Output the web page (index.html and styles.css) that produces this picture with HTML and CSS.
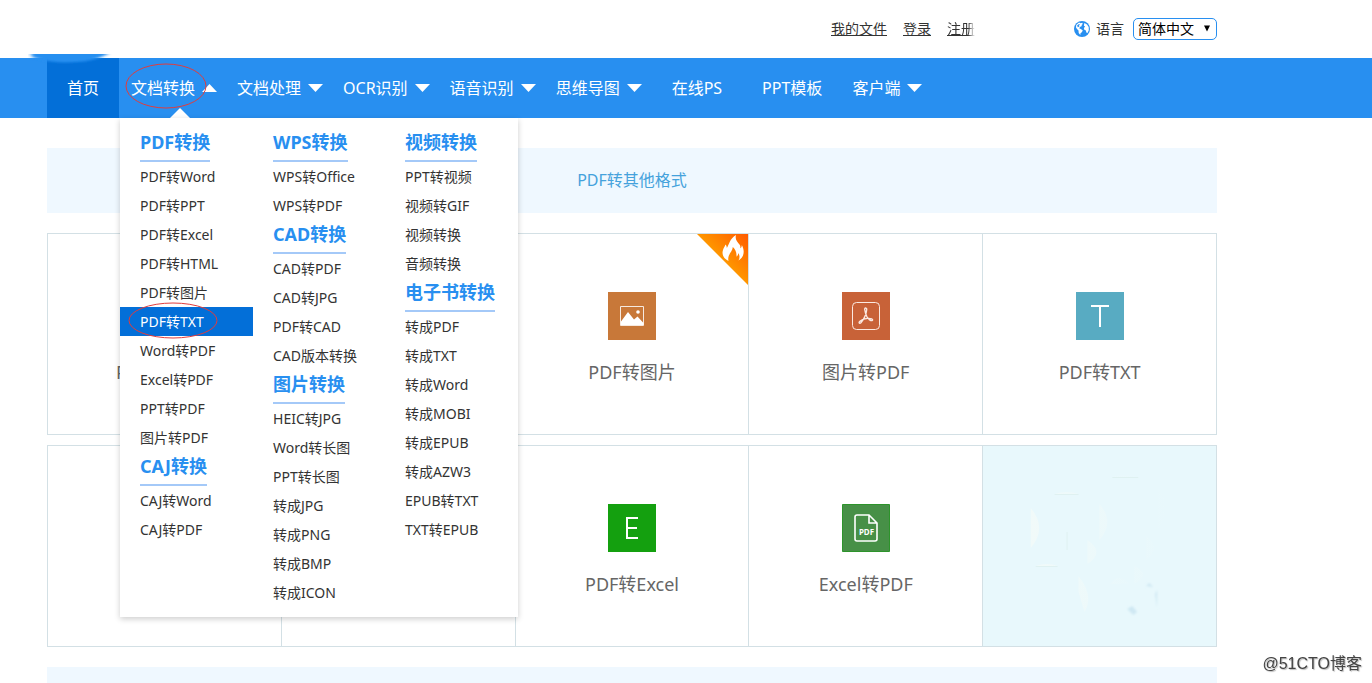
FILE: index.html
```html
<!DOCTYPE html>
<html lang="zh-CN">
<head>
<meta charset="utf-8">
<title>PDF转换</title>
<link rel="stylesheet" href="styles.css">
</head>
<body>
<header class="top">
  <div class="wrap top-row">
    <a class="top-link" href="#">我的文件</a>
    <a class="top-link" href="#">登录</a>
    <a class="top-link fade" href="#">注册</a>
    <div class="lang">
      <svg class="globe" viewBox="0 0 16 16" aria-hidden="true"><circle cx="8" cy="8" r="8" fill="#288ff0"/><path d="M2.200 4 5 1.600l1.600.6 1.600-.5.6 1.200-1.300 1 .4 1.200-2 .9-.6 1.500 1.600.6 1.900 1.400-1 1.800-1.300.9-.2 1.800L4.700 12l-.2-2.400L3 7.900l-1-1.400zM10.400 2l2.600 1.400 1.700 2.600.1 3.300-1.300 2.600-1.200-.3-.4-2-1.600-.8-.4-1.900 1.200-1.400-1.200-.8.2-1.400z" fill="#fff"/><path d="M3.100 4.500 5 3l.9.6-1 1.100.6.8-1.700.7z" fill="#288ff0"/></svg>
      <label for="lang">语言</label>
      <span class="select-box">
        <select id="lang"><option>简体中文</option></select>
        <svg class="caret" viewBox="0 0 6 6" aria-hidden="true"><path d="M0 0h6L3 6z"/></svg>
      </span>
    </div>
  </div>
</header>

<nav class="nav">
  <svg class="logo-edge" viewBox="0 0 90 20" aria-hidden="true"><defs><filter id="soft"><feGaussianBlur stdDeviation="2 1"/></filter></defs><path d="M2-4h78v4q-16 8-32 8-26 2-44-5z" fill="#288ff0" filter="url(#soft)"/></svg>
  <div class="wrap nav-row">
    <a class="nav-item plain active" href="#">首页</a>
    <div class="nav-group">
      <a class="nav-item" href="#">文档转换<svg class="arrow" viewBox="0 0 15 8" aria-hidden="true"><path d="M0 8h15L7.500 0z" fill="#fff"/></svg></a>
      <svg class="mark mark-nav" viewBox="0 0 82 46" aria-hidden="true"><ellipse cx="41" cy="23" rx="40" ry="22"/></svg>
      <svg class="pointer" viewBox="0 0 20 10" aria-hidden="true"><path d="M0 10 10 0l10 10z" fill="#fff"/></svg>
      <div class="menu">
        <div class="menu-col">
          <h3>PDF转换</h3>
          <a href="#">PDF转Word</a><a href="#">PDF转PPT</a><a href="#">PDF转Excel</a><a href="#">PDF转HTML</a><a href="#">PDF转图片</a>
          <a class="current" href="#">PDF转TXT<svg class="mark mark-menu" viewBox="0 0 90 37" aria-hidden="true"><ellipse cx="45" cy="18.500" rx="44" ry="17.500"/></svg></a>
          <a href="#">Word转PDF</a><a href="#">Excel转PDF</a><a href="#">PPT转PDF</a><a href="#">图片转PDF</a>
          <h3>CAJ转换</h3>
          <a href="#">CAJ转Word</a><a href="#">CAJ转PDF</a>
        </div>
        <div class="menu-col">
          <h3>WPS转换</h3>
          <a href="#">WPS转Office</a><a href="#">WPS转PDF</a>
          <h3>CAD转换</h3>
          <a href="#">CAD转PDF</a><a href="#">CAD转JPG</a><a href="#">PDF转CAD</a><a href="#">CAD版本转换</a>
          <h3>图片转换</h3>
          <a href="#">HEIC转JPG</a><a href="#">Word转长图</a><a href="#">PPT转长图</a><a href="#">转成JPG</a><a href="#">转成PNG</a><a href="#">转成BMP</a><a href="#">转成ICON</a>
        </div>
        <div class="menu-col">
          <h3>视频转换</h3>
          <a href="#">PPT转视频</a><a href="#">视频转GIF</a><a href="#">视频转换</a><a href="#">音频转换</a>
          <h3>电子书转换</h3>
          <a href="#">转成PDF</a><a href="#">转成TXT</a><a href="#">转成Word</a><a href="#">转成MOBI</a><a href="#">转成EPUB</a><a href="#">转成AZW3</a><a href="#">EPUB转TXT</a><a href="#">TXT转EPUB</a>
        </div>
      </div>
    </div>
    <a class="nav-item" href="#">文档处理<svg class="arrow" viewBox="0 0 15 8" aria-hidden="true"><path d="M0 0h15L7.500 8z" fill="#fff"/></svg></a>
    <a class="nav-item" href="#">OCR识别<svg class="arrow" viewBox="0 0 15 8" aria-hidden="true"><path d="M0 0h15L7.500 8z" fill="#fff"/></svg></a>
    <a class="nav-item" href="#">语音识别<svg class="arrow" viewBox="0 0 15 8" aria-hidden="true"><path d="M0 0h15L7.500 8z" fill="#fff"/></svg></a>
    <a class="nav-item" href="#">思维导图<svg class="arrow" viewBox="0 0 15 8" aria-hidden="true"><path d="M0 0h15L7.500 8z" fill="#fff"/></svg></a>
    <a class="nav-item plain" href="#">在线PS</a>
    <a class="nav-item plain" href="#">PPT模板</a>
    <a class="nav-item" href="#">客户端<svg class="arrow" viewBox="0 0 15 8" aria-hidden="true"><path d="M0 0h15L7.500 8z" fill="#fff"/></svg></a>
  </div>
</nav>

<main class="wrap content">
  <h2 class="band">PDF转其他格式</h2>
  <div class="cards">
    <a class="card label-only" href="#">PDF转Word</a>
    <div class="card"></div>
    <a class="card" href="#">
      <svg class="hot" viewBox="0 0 51 51" aria-hidden="true"><defs><linearGradient id="fire" x1="1" y1="0" x2=".45" y2=".55"><stop offset="0" stop-color="#ff5a00"/><stop offset="1" stop-color="#ff9c00"/></linearGradient></defs><path d="M0 0h51v51z" fill="url(#fire)"/><path d="M31.500 27c-5-2.500-7-6.500-5.500-11 .8-2.500 2-3.500 2.500-5.500 1 1 1.300 2.200 1.300 3.500C32.500 10 32.500 5 39 1c-1.300 4.500 1.500 7 3.500 9.500 1 1.300 1 2.500.8 3.800 1-.6 1.500-1.800 1.500-3.300 2.500 4.500 3.500 11.500-3.300 15.500 1.500-2.500 1.300-5-.2-7.500-.1 2-.8 3-1.800 3.500.3-4.500-1.500-7.500-3.700-9.500 0 4.500-5.800 7.500-4.300 14z" fill="#fff"/></svg>
      <svg class="icon" viewBox="0 0 48 48" aria-hidden="true"><path d="M0 0h48v48H0z" fill="#c87839"/><path d="M12.500 14.500h23v19h-23z" fill="none" stroke="#f6e9df"/><path d="M13 29.500 20 20l6 7.500 3.500-3 6 6.500v2H13z" fill="#fff"/><circle cx="30" cy="20" r="1.800" fill="#fff"/></svg>
      <span>PDF转图片</span>
    </a>
    <a class="card" href="#">
      <svg class="icon" viewBox="0 0 48 48" aria-hidden="true"><path d="M0 0h48v48H0z" fill="#c86238"/><g fill="none" stroke="#fbe9e1"><rect x="10.500" y="10.500" width="27" height="27" rx="4"/><path d="M22.700 17c.5-1.500 2.300-1.200 2 .7-.5 4.800-3.500 10.300-5.800 13-1.700 1.500-2.500-.3-1-1.500 3.200-2.500 8.500-3.200 12-2.200 1.500.8.300 2-1.200 1.500-3.200-1.300-5-5-6-11z" stroke-width="1.400"/></g></svg>
      <span>图片转PDF</span>
    </a>
    <a class="card" href="#">
      <svg class="icon" viewBox="0 0 48 48" aria-hidden="true"><path d="M0 0h48v48H0z" fill="#58abc2"/><path d="M15 14h18M24 14v21" fill="none" stroke="#fff" stroke-width="2"/></svg>
      <span>PDF转TXT</span>
    </a>
  </div>
  <div class="cards">
    <div class="card"></div>
    <div class="card"></div>
    <a class="card" href="#">
      <svg class="icon" viewBox="0 0 48 48" aria-hidden="true"><path d="M0 0h48v48H0z" fill="#14a00f"/><path d="M30 14H19v20h11M19 24h10" fill="none" stroke="#fff" stroke-width="2"/></svg>
      <span>PDF转Excel</span>
    </a>
    <a class="card" href="#">
      <svg class="icon" viewBox="0 0 48 48" aria-hidden="true"><path d="M.5.5h47v47H.5z" fill="#479047" stroke="#2d942b"/><path d="M15 11h12l8 8v16q0 2-2 2H15q-2 0-2-2V13q0-2 2-2zM27 11v8h8" fill="none" stroke="#fff" stroke-width="1.600"/><text class="doc-text" x="24.500" y="30.500" text-anchor="middle">PDF</text></svg>
      <span>Excel转PDF</span>
    </a>
    <div class="card pale">
      <svg class="traces" viewBox="0 0 234 200" preserveAspectRatio="none" aria-hidden="true"><defs><linearGradient id="glow"><stop offset="0" stop-color="#f1faf9"/><stop offset="1" stop-color="#e8f8fc"/></linearGradient><filter id="haze"><feGaussianBlur stdDeviation="1"/></filter></defs><g fill="url(#glow)"><path d="M48 62q17 20 0 40zM117 58q16 18 0 36zM176 42q16 21 0 42zM105 94q18 12 0 24zM164 90q16 12 0 24zM152 120q18 8 0 18zM96 130q16 20 6 36l-6-20z"/><path d="M72 48q12-4 24 0zM130 31q13-4 26 0zM53 120q12-4 22 0zM128 138q8-12 20 0z"/></g><path d="M84.500 86v18M72 48.500h24M130 31.500h26M53 120.500h22" stroke="#dff1f1" fill="none"/><g fill="#cfe8f3" filter="url(#haze)"><path d="M173 148l2-4v18zM145 163l5-3 5 6-4 3zM164 140l3-3 4 4z"/></g></svg>
    </div>
  </div>
  <div class="band-next"></div>
</main>
<div class="watermark">@51CTO博客</div>
</body>
</html>
```
FILE: styles.css
```css
* { box-sizing: border-box; }
body {
  margin: 0;
  min-height: 100vh;
  display: flex;
  flex-direction: column;
  background: #fff;
  color: #333;
  font: 14px/20px "Noto Sans", "Noto Sans CJK SC", sans-serif;
}
a { color: inherit; text-decoration: none; }
h2, h3 { margin: 0; }
.wrap { width: 100%; max-width: 1217px; padding-left: 47px; }

.top-row {
  display: flex;
  justify-content: flex-end;
  align-items: center;
  gap: 16px;
  height: 58px;
}
.top-link { text-decoration: underline; }
.fade {
  -webkit-mask-image: linear-gradient(90deg, #000 75%, transparent);
  mask-image: linear-gradient(90deg, #000 75%, transparent);
}
.lang { display: flex; align-items: center; gap: 6px; margin-left: 83px; }
.globe { width: 16px; height: 16px; }
.select-box { position: relative; display: flex; margin-left: 3px; }
.select-box select {
  appearance: none;
  width: 84px;
  height: 22px;
  padding: 0 4px;
  border: 1px solid #288ff0;
  border-radius: 5px;
  background: #fff;
  color: #000;
  font: inherit;
  line-height: 20px;
}
.caret { position: absolute; right: 7px; top: 7px; width: 6px; height: 7px; pointer-events: none; }

.nav { position: relative; z-index: 2; background: #288ff0; }
.logo-edge { position: absolute; left: 28px; top: -4px; width: 90px; height: 20px; z-index: 1; }
.nav-row { display: flex; height: 60px; }
.nav-item {
  display: flex;
  align-items: center;
  gap: 7px;
  height: 60px;
  padding: 0 10px;
  color: #fff;
  font-size: 16px;
  white-space: nowrap;
}
.plain { padding: 0 20px; }
.active { background: #036fd8; }
.arrow { width: 15px; height: 8px; }
.nav-group { position: relative; margin-left: 2px; }
.mark { position: absolute; fill: none; stroke: #e23c3c; stroke-width: 1; pointer-events: none; }
.mark-nav { left: 4px; top: 5px; width: 82px; height: 46px; }
.mark-menu { left: 8px; top: -5px; width: 90px; height: 37px; z-index: 1; }
.pointer { position: absolute; left: 49px; bottom: 0; width: 20px; height: 10px; }

.menu {
  position: absolute;
  left: -1px;
  top: 100%;
  display: grid;
  grid-template-columns: 133px 132px 133px;
  padding: 10px 0;
  background: #fff;
  box-shadow: 0 2px 6px rgba(0, 0, 0, .2);
}
.menu-col { display: flex; flex-direction: column; }
.menu-col h3 {
  align-self: flex-start;
  margin-left: 20px;
  padding-bottom: 4px;
  border-bottom: 2px solid #a4c9f8;
  color: #288ff0;
  font-size: 18px;
  line-height: 28px;
}
.menu-col a { position: relative; padding-left: 20px; line-height: 29px; white-space: nowrap; }
.menu-col .current { background: #036fd8; color: #fff; }

.content { flex: 1; display: flex; flex-direction: column; padding-top: 30px; }
.band {
  margin-bottom: 20px;
  background: #eff8ff;
  color: #45a2dc;
  font-size: 16px;
  font-weight: 400;
  line-height: 65px;
  text-align: center;
}
.cards {
  display: grid;
  grid-template-columns: repeat(5, 1fr);
  margin-bottom: 10px;
  border: 1px solid #d3e0e5;
  border-right: 0;
}
.card {
  position: relative;
  display: flex;
  flex-direction: column;
  align-items: center;
  gap: 20px;
  min-height: 200px;
  padding-top: 58px;
  border-right: 1px solid #d3e0e5;
  color: #666;
  font-size: 18px;
  line-height: 24px;
}
.label-only { padding-top: 126px; }
.icon { width: 48px; height: 48px; }
.hot { position: absolute; right: 0; top: 0; width: 51px; height: 51px; }
.doc-text { fill: #fff; font-size: 8px; font-weight: 700; }
.pale { padding: 0; background: #e8f8fc; }
.traces { width: 100%; height: 200px; }
.band-next { flex: 1; min-height: 16px; margin-top: 10px; background: #eff8ff; }
.watermark {
  position: fixed;
  right: 10px;
  bottom: 8px;
  color: #444;
  font: 16px/22px "Liberation Sans", "Noto Sans CJK SC", sans-serif;
  text-shadow: 1px 1px 1px #bbb;
}
```
